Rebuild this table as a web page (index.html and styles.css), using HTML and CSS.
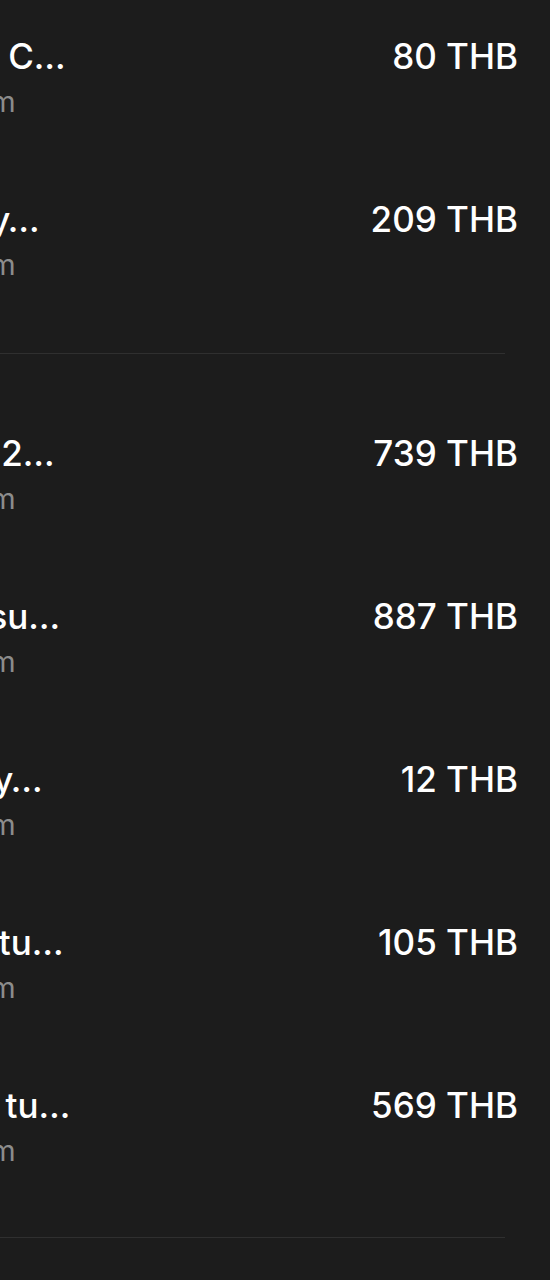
FILE: index.html
```html
<!DOCTYPE html>
<html lang="en">
<head>
<meta charset="utf-8">
<link rel="stylesheet" href="styles.css">
</head>
<body>
<main class="list">
  <section class="group">
    <div class="row">
      <div class="info"><div class="title">Apple Total C…</div><div class="sub">Today, 1:00 am</div></div>
      <div class="price">80 THB</div>
    </div>
    <div class="row">
      <div class="info"><div class="title">Viu Monthly…</div><div class="sub">Today, 1:00 am</div></div>
      <div class="price">209 THB</div>
    </div>
  </section>
  <hr class="divider">
  <section class="group">
    <div class="row">
      <div class="info"><div class="title">Canva Pro, 2…</div><div class="sub">Today, 1:00 am</div></div>
      <div class="price">739 THB</div>
    </div>
    <div class="row">
      <div class="info"><div class="title">Netflix HD su…</div><div class="sub">Today, 1:00 am</div></div>
      <div class="price">887 THB</div>
    </div>
    <div class="row">
      <div class="info"><div class="title">TrueID Daily…</div><div class="sub">Today, 1:00 am</div></div>
      <div class="price">12 THB</div>
    </div>
    <div class="row">
      <div class="info"><div class="title">iQIYI VIP Altu…</div><div class="sub">Today, 1:00 am</div></div>
      <div class="price">105 THB</div>
    </div>
    <div class="row">
      <div class="info"><div class="title">Spotify: Cu tu…</div><div class="sub">Today, 1:00 am</div></div>
      <div class="price">569 THB</div>
    </div>
  </section>
  <hr class="divider">
</main>
</body>
</html>
```
FILE: styles.css
```css
html, body {
  margin: 0;
  padding: 0;
  background: #1c1c1c;
  overflow: hidden;
}
body {
  font-family: Inter, "Noto Sans", sans-serif;
  color: #ffffff;
  width: 550px;
  height: 1280px;
}
.list {
  margin-left: -210px;
  padding-top: 12px;
}
.group {
  display: flex;
  flex-direction: column;
}
.row {
  display: flex;
  justify-content: space-between;
  align-items: flex-start;
  height: 163px;
  box-sizing: border-box;
  padding: 24px 32px 0 20px;
}
.info {
  display: flex;
  flex-direction: column;
  gap: 8px;
  white-space: nowrap;
}
.title {
  font-size: 35px;
  line-height: 40px;
  font-weight: 500;
}
.sub {
  font-size: 29px;
  line-height: 36px;
  color: #8c8c8c;
}
.price {
  font-size: 35px;
  line-height: 40px;
  font-weight: 500;
}
.divider {
  border: 0;
  height: 1px;
  background: #2f2f2f;
  margin: 15px 45px 55px 0;
}
.group + .divider + .group + .divider {
  margin-top: 13px;
}
```
